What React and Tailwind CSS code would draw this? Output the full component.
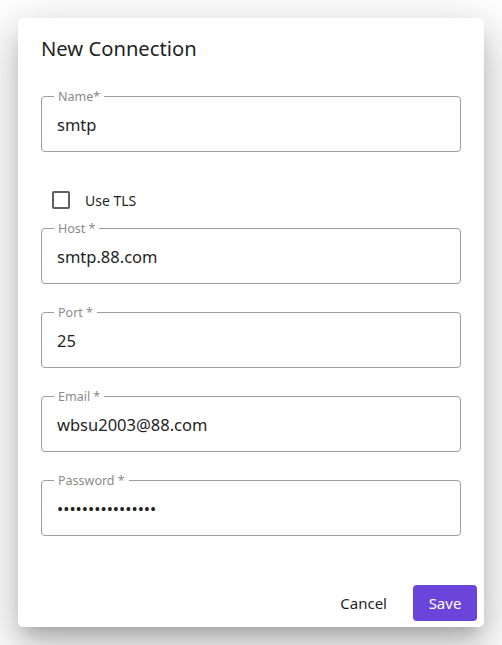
import React from "react";

const fields = [
  { label: "Host *", value: "smtp.88.com" },
  { label: "Port *", value: "25" },
  { label: "Email *", value: "wbsu2003@88.com" },
  { label: "Password *", value: "abcdefghijklmnop", type: "password" },
];

function Field({ label, value, type = "text" }) {
  return (
    <div className="relative h-[56px] rounded-[4px] border border-[#9e9e9e]">
      <span className="absolute -top-[9px] left-[12px] bg-white px-[4px] text-[12.5px] leading-[18px] text-[#8a8a8a]">
        {label}
      </span>
      <input
        type={type}
        defaultValue={value}
        readOnly
        className="h-full w-full bg-transparent pl-[15px] pr-3 text-[16.5px] text-[#1f1f1f] outline-none"
      />
    </div>
  );
}

export default function App() {
  return (
    <div
      className="min-h-[645px] bg-white p-[18px]"
      style={{ fontFamily: '"Noto Sans", "Open Sans", sans-serif' }}
    >
      <div className="flex h-[609px] w-[466px] flex-col rounded-[5px] bg-white shadow-[0_11px_15px_-7px_rgba(0,0,0,0.2),0_24px_38px_3px_rgba(0,0,0,0.14),0_9px_46px_8px_rgba(0,0,0,0.12)]">
        <div className="px-[23px] pt-[16px]">
          <h2 className="text-[20.2px] leading-[28px] text-[#1f1f1f]">New Connection</h2>

          <div className="mt-[34px]">
            <Field label="Name*" value="smtp" />
          </div>

          <label className="mt-[28px] flex h-[40px] items-center pl-[11px]">
            <span className="h-[18px] w-[18px] rounded-[2px] border-2 border-[#5f5f5f]" />
            <span className="ml-[15px] text-[14px] text-[#1f1f1f]">Use TLS</span>
          </label>

          <div className="mt-[8px] flex flex-col gap-[28px]">
            {fields.map((f) => (
              <Field key={f.label} label={f.label} value={f.value} type={f.type} />
            ))}
          </div>
        </div>

        <div className="mt-auto flex items-center justify-end gap-[18px] px-[7px] pb-[6px]">
          <button className="h-[36px] rounded-[4px] px-[8px] text-[15px] text-[#1f1f1f]">Cancel</button>
          <button className="h-[36px] w-[64px] rounded-[4px] bg-[#6b45da] text-[15px] text-white">Save</button>
        </div>
      </div>
    </div>
  );
}
